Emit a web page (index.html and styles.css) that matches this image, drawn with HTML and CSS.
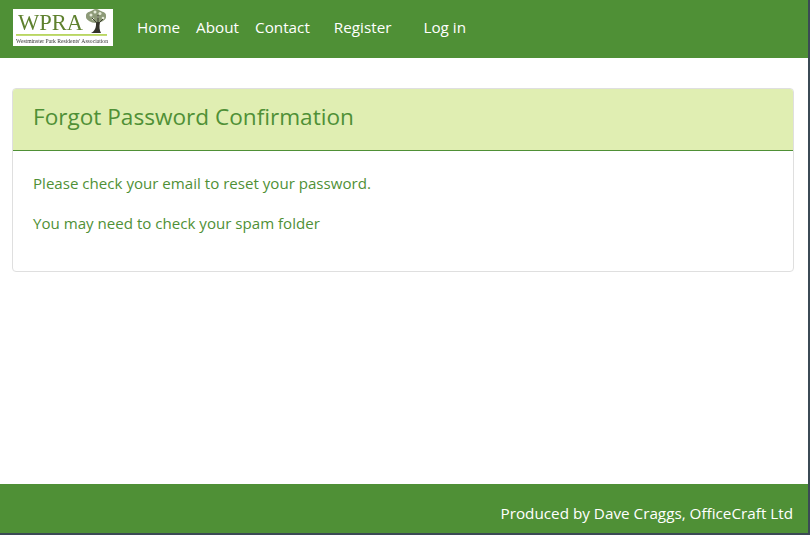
FILE: index.html
```html
<!DOCTYPE html>
<html lang="en">
<head>
<meta charset="utf-8">
<title>Forgot Password Confirmation</title>
<link rel="stylesheet" href="styles.css">
</head>
<body>
<div class="frame">
<header class="navbar">
  <a class="brand" href="#">
    <svg class="logo" viewBox="0 0 100 37" width="100" height="37" role="img" aria-label="WPRA logo">
      <rect width="100" height="37" fill="#fff"/>
      <g class="logo-art">
      <text class="logo-title" x="5" y="21" textLength="65" lengthAdjust="spacingAndGlyphs">WPRA</text>
      <rect x="3" y="25.200" width="91" height="1.500" fill="#a9cc3c"/>
      <text class="logo-sub" x="3" y="33.800" textLength="92" lengthAdjust="spacingAndGlyphs">Westminster Park Residents' Association</text>
      <g fill="#8d9a78">
        <ellipse cx="83" cy="7.500" rx="10" ry="6.500"/>
        <circle cx="77" cy="7" r="4"/>
        <circle cx="89" cy="7" r="4"/>
        <circle cx="83" cy="4" r="4"/>
      </g>
      <g fill="#e4ead8">
        <circle cx="78" cy="6" r="1.500"/>
        <circle cx="82" cy="3" r="1.500"/>
        <circle cx="87" cy="4.500" r="1.500"/>
        <circle cx="90" cy="9" r="1.300"/>
        <circle cx="80" cy="10" r="1.200"/>
        <circle cx="85" cy="8" r="1"/>
      </g>
      <path d="M78 24 C82 22 83.500 18 83 13 L87 13 C86 18 86.500 21 88 24 Z" fill="#33332a"/>
      <path d="M84 14 L79 9 M85 14 L85 6 M86 14 L90 10" fill="none" stroke="#3f4032" stroke-width="1"/>
      </g>
    </svg>
  </a>
  <nav class="nav">
    <a href="#">Home</a>
    <a href="#">About</a>
    <a href="#">Contact</a>
  </nav>
  <nav class="nav nav-account">
    <a href="#">Register</a>
    <a href="#">Log in</a>
  </nav>
</header>
<main class="main">
  <section class="card">
    <div class="card-header"><h1>Forgot Password Confirmation</h1></div>
    <div class="card-body">
      <p>Please check your email to reset your password.</p>
      <p>You may need to check your spam folder</p>
    </div>
  </section>
</main>
<footer class="footer">Produced by Dave Craggs, OfficeCraft Ltd</footer>
</div>
</body>
</html>
```
FILE: styles.css
```css
* { box-sizing: border-box; }
html, body { margin: 0; height: 100%; }
body {
  font-family: "Open Sans", "Noto Sans", "Liberation Sans", sans-serif;
  font-size: 15.250px;
  background: #3b4a55;
  overflow: hidden;
}
a { color: inherit; text-decoration: none; }
.frame {
  width: 808px;
  height: 533px;
  display: flex;
  flex-direction: column;
  background: #fff;
}
.navbar {
  flex: none;
  height: 58px;
  background: #4f9036;
  color: #fff;
  display: flex;
  align-items: center;
  padding: 0 13px 5px;
}
.brand { display: flex; margin-right: 24px; padding-top: 1px; }
.logo-art { filter: blur(0.35px); }
.logo-title { font-family: "Liberation Serif", serif; font-size: 24px; fill: #5f812f; }
.logo-sub { font-family: "Liberation Serif", serif; font-size: 5.500px; fill: #333; }
.nav { display: flex; gap: 16px; }
.nav-account { gap: 32px; margin-left: 24px; }
.main { flex: 1; padding: 30px 14px 0 12px; }
.card {
  height: 184px;
  border: 1px solid #dfdfdf;
  border-radius: 4px;
  overflow: hidden;
}
.card-header {
  height: 62px;
  padding: 0 20px 6px;
  display: flex;
  align-items: center;
  background: #e0eeb2;
  border-bottom: 1px solid #4f9036;
}
.card-header h1 {
  margin: 0;
  font-size: 22.600px;
  font-weight: 400;
  color: #4f9036;
}
.card-body {
  padding: 22px 20px 0;
  color: #4f9036;
  font-size: 15.100px;
}
.card-body p { margin: 0 0 19px; line-height: 21px; }
.footer {
  flex: none;
  height: 49px;
  background: #4f9036;
  color: #fff;
  display: flex;
  align-items: center;
  justify-content: flex-end;
  padding: 9px 15px 0 0;
}
```
